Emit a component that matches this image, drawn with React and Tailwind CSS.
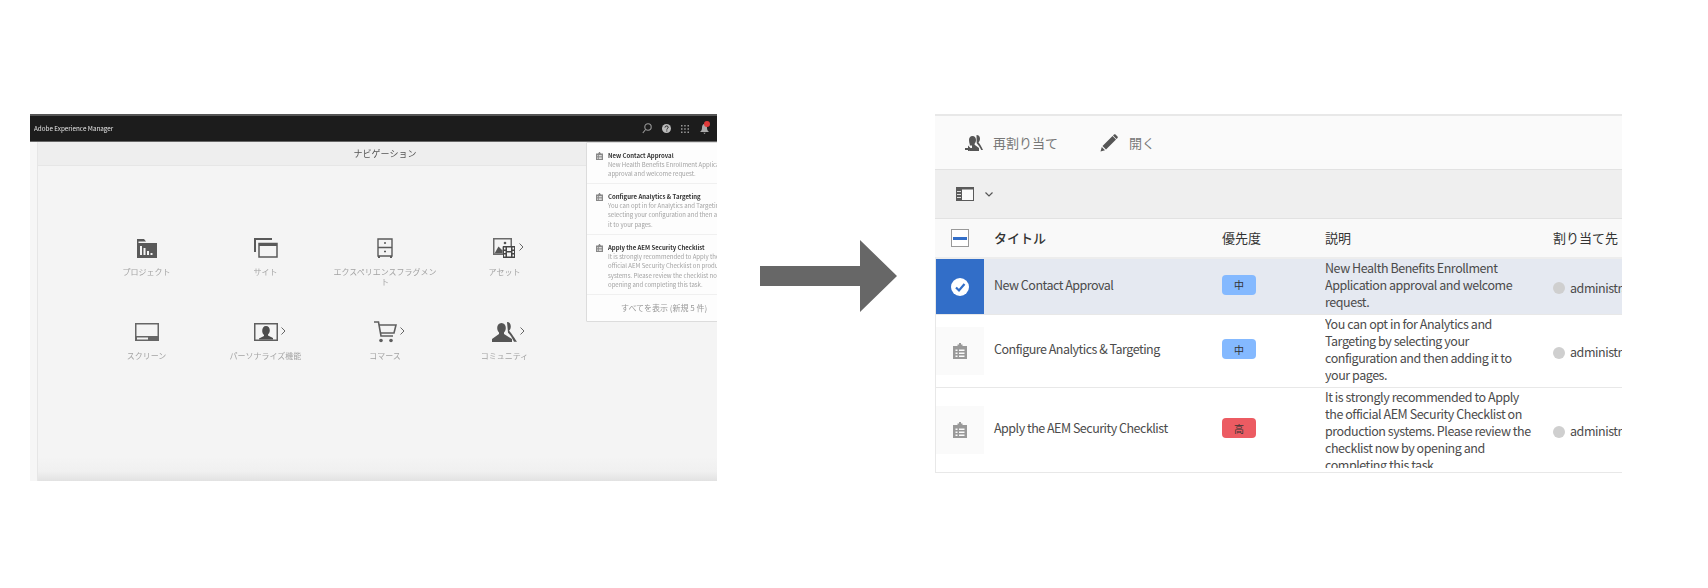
import React from 'react';

const navItems = [
  { label: 'プロジェクト', icon: 'project' },
  { label: 'サイト', icon: 'sites' },
  { label: 'エクスペリエンスフラグメント', icon: 'fragments' },
  { label: 'アセット', icon: 'assets', more: true },
  { label: 'スクリーン', icon: 'screens' },
  { label: 'パーソナライズ機能', icon: 'personalize', more: true },
  { label: 'コマース', icon: 'cart', more: true },
  { label: 'コミュニティ', icon: 'community', more: true },
];

const notices = [
  {
    title: 'New Contact Approval',
    text: 'New Health Benefits Enrollment Application approval and welcome request.',
    height: 'h-[41px]',
  },
  {
    title: 'Configure Analytics & Targeting',
    text: 'You can opt in for Analytics and Targeting by selecting your configuration and then adding it to your pages.',
    height: 'h-[51px]',
  },
  {
    title: 'Apply the AEM Security Checklist',
    text: 'It is strongly recommended to Apply the official AEM Security Checklist on production systems. Please review the checklist now by opening and completing this task.',
    height: 'h-[60px]',
  },
];

const tasks = [
  {
    title: 'New Contact Approval',
    priority: '中',
    badge: 'bg-[#84b9ff]',
    text: 'New Health Benefits Enrollment\nApplication approval and welcome\nrequest.',
    selected: true,
  },
  {
    title: 'Configure Analytics & Targeting',
    priority: '中',
    badge: 'bg-[#84b9ff]',
    text: 'You can opt in for Analytics and\nTargeting by selecting your\nconfiguration and then adding it to\nyour pages.',
  },
  {
    title: 'Apply the AEM Security Checklist',
    priority: '高',
    badge: 'bg-[#ec5b62]',
    text: 'It is strongly recommended to Apply\nthe official AEM Security Checklist on\nproduction systems. Please review the\nchecklist now by opening and\ncompleting this task.',
  },
];

const NavIcon = ({ name }) => {
  if (name === 'project') {
    return (
      <svg width="22" height="20" viewBox="0 0 22 20" fill="#595959">
        <path d="M1 1h7l2 2.500H2.500V5H21v15H1z" />
        <path fill="#f4f4f4" d="M4 8h2v9H4zM7.500 10h2v7h-2zM11 13h2v4h-2zM14.500 15h2v2h-2z" />
      </svg>
    );
  }
  if (name === 'sites') {
    return (
      <svg width="24" height="22" viewBox="0 0 24 22" fill="none" stroke="#595959">
        <path d="M1 15V2h17" strokeWidth="2" />
        <path d="M5 6.500h18V20H5z" strokeWidth="1.500" />
        <path d="M5 6h18v3H5z" fill="#595959" stroke="none" />
      </svg>
    );
  }
  if (name === 'fragments') {
    return (
      <svg width="16" height="20" viewBox="0 0 16 20" fill="none" stroke="#5a5a5a" strokeWidth="1.400">
        <path d="M1 1h14v17H1zM1 9.500h14" />
        <path d="M2 18v2M14 18v2" strokeWidth="2" />
        <path d="M7 5h2M7 13.500h2" strokeWidth="1.500" />
      </svg>
    );
  }
  if (name === 'assets') {
    return (
      <svg width="23" height="20" viewBox="0 0 23 20">
        <path d="M0 0h19v9h-9v8H0z" fill="#6a6a6a" />
        <path d="M1.500 1.500h16v7h-8v7h-8z" fill="#f4f4f4" />
        <path d="M1.500 15.500l4-7 4 4v3z" fill="#555" />
        <circle cx="12" cy="5" r="1.300" fill="#555" />
        <path d="M10 8h12v12H10z" fill="#444" />
        <path fill="#f4f4f4" d="M11 9.500h1.500v2H11zM11 13h1.500v2H11zM11 16.500h1.500v2H11zM19.500 9.500H21v2h-1.500zM19.500 13H21v2h-1.500zM19.500 16.500H21v2h-1.500zM14 9.500h4v3.500h-4zM14 14.500h4v4h-4z" />
      </svg>
    );
  }
  if (name === 'screens') {
    return (
      <svg width="24" height="18" viewBox="0 0 24 18">
        <path d="M0 0h24v18H0z" fill="#666" />
        <path d="M1.500 1.500h21V13h-21z" fill="#f4f4f4" />
        <path d="M2 14.500h11v2H2z" fill="#f4f4f4" />
      </svg>
    );
  }
  if (name === 'personalize') {
    return (
      <svg width="24" height="18" viewBox="0 0 24 18">
        <path d="M0 0h24v18H0z" fill="#5f5f5f" />
        <path d="M1.500 1.500h21v15h-21z" fill="#f4f4f4" />
        <path d="M12 3c2.500 0 3.800 2 3.800 4.500 0 1.800-1 3.300-1.800 4v1l5 2.500v1.500H5V15.500l5-2.500v-1c-.8-.7-1.800-2.200-1.800-4C8.200 5 9.500 3 12 3z" fill="#4d4d4d" />
      </svg>
    );
  }
  if (name === 'cart') {
    return (
      <svg width="23" height="22" viewBox="0 0 23 22" fill="none" stroke="#5f5f5f" strokeWidth="1.600">
        <path d="M0 1h4.500l2.500 14h12" />
        <path d="M5 4h17l-2 8H6.500" />
        <circle cx="7" cy="19.500" r="1.800" fill="#5f5f5f" stroke="none" />
        <circle cx="17" cy="19.500" r="1.800" fill="#5f5f5f" stroke="none" />
      </svg>
    );
  }
  return (
    <svg width="25" height="20" viewBox="0 0 25 20" fill="#555">
      <path d="M15 0c2.600 0 3.800 2 3.800 4.500 0 2-1 3.600-1.700 4.300 2 2 3.900 5 7.900 11h-3c-2-4-3.500-7-6-9z" />
      <path d="M9.500 1c2.800 0 4.300 2.200 4.300 5 0 2-1 3.800-1.800 4.600v1.400L20 17v3H0v-3l7-5v-1.400C6.200 9.800 5.200 8 5.200 6c0-2.800 1.500-5 4.300-5z" />
    </svg>
  );
};

const TaskIcon = ({ size = 14, color = '#999' }) => (
  <svg width={size} height={size * 1.15} viewBox="0 0 14 16" fill={color}>
    <path d="M0 3h4.500V1.500h1.500V0h2v1.500h1.500V3H14v13H0z" />
    <path fill="#fafafa" d="M2.500 6.500h2V8h-2zM6 6.500h5.500V8H6zM2.500 9.500h2V11h-2zM6 9.500h5.500V11H6zM2.500 12.500h2V14h-2zM6 12.500h5.500V14H6z" />
  </svg>
);

const LeftPanel = () => (
  <div className="relative w-[687px] h-[367px] shrink-0 overflow-hidden bg-[#f4f4f4] blur-[0.3px]">
    <div className="h-[28px] bg-[#1c1c1c] border-t-2 border-b border-t-[#555] border-b-[#666] flex items-center pl-1 pr-[8px]">
      <span className="text-[6.300px] text-[#e4e4e4]">Adobe Experience Manager</span>
      <div className="ml-auto flex items-center gap-[10px]">
        <svg width="10" height="11" viewBox="0 0 10 11" fill="none" stroke="#999" strokeWidth="1.100">
          <circle cx="6" cy="4" r="3.200" />
          <path d="M3.600 6.500L.8 10" />
        </svg>
        <svg width="9" height="9" viewBox="0 0 9 9">
          <circle cx="4.500" cy="4.500" r="4.500" fill="#bbb" />
          <path d="M3 3.500c0-2 3.200-2 3.200-.2 0 1.100-1.400 1.100-1.400 2.300" fill="none" stroke="#1c1c1c" strokeWidth="1" />
          <path d="M4.300 6.500h1v1h-1z" fill="#1c1c1c" />
        </svg>
        <svg width="8" height="8" viewBox="0 0 8 8" fill="#999">
          <path d="M0 0h1.500v1.500H0zM3.200 0h1.500v1.500H3.200zM6.500 0H8v1.500H6.500zM0 3.200h1.500v1.500H0zM3.200 3.200h1.500v1.500H3.200zM6.500 3.200H8v1.500H6.500zM0 6.500h1.500V8H0zM3.200 6.500h1.500V8H3.200zM6.500 6.500H8V8H6.500z" />
        </svg>
        <div className="relative ml-[1px]">
          <svg width="9" height="10" viewBox="0 0 9 10" fill="#aaa">
            <path d="M4.500 0C6.500 0 7 2 7 4c0 2 1 3 2 4H0c1-1 2-2 2-4s.5-4 2.500-4zM3.300 8.700h2.400L4.500 10z" />
          </svg>
          <span className="absolute -top-[3px] left-[4px] w-[6px] h-[6px] rounded-full bg-[#e03a3a]" />
        </div>
      </div>
    </div>
    <div className="flex h-[339px]">
      <div className="w-[8px] shrink-0 bg-[#f6f6f6] border-r border-[#e6e6e6]" />
      <div className="relative flex-1 flex flex-col">
        <div className="h-[24px] shrink-0 bg-[#eeeeee] border-b border-[#e6e6e6] flex items-center justify-center pl-[15px] text-[9px] text-[#555]">
          ナビゲーション
        </div>
        <div className="grid grid-cols-[119px_119px_120px_119px] auto-rows-[84px] pl-[49px] pt-[71px]">
          {navItems.map(item => (
            <div key={item.label} className="flex flex-col items-center">
              <div className="relative h-[22px] flex items-center justify-center">
                <NavIcon name={item.icon} />
                {item.more && (
                  <svg width="5" height="8" viewBox="0 0 5 8" fill="none" stroke="#666" strokeWidth="1" className="absolute left-full top-[6px] ml-[3px]">
                    <path d="M.5.5L4 4 .5 7.500" />
                  </svg>
                )}
              </div>
              <div className="mt-[8px] w-[105px] text-center text-[8px] leading-[10px] text-[#a3a3a3]">{item.label}</div>
            </div>
          ))}
        </div>
        <div className="absolute left-0 right-0 bottom-0 h-[24px] bg-gradient-to-b from-[#f4f4f4] via-[#f0f0f0] via-60% to-[#e2e2e2]" />
      </div>
    </div>
    <div className="absolute left-[556px] top-[28px] w-[170px] bg-[#fdfdfd] border border-[#dcdcdc] rounded-[1px]">
      {notices.map(notice => (
        <div key={notice.title} className={`flex border-b border-[#f0f0f0] pl-[9px] pt-[8px] ${notice.height}`}>
          <div className="w-[12px] shrink-0 pt-[1px]">
            <TaskIcon size={7} color="#888" />
          </div>
          <div className="w-[130px]">
            <div className="text-[6px] leading-[9px] font-bold text-[#333]">{notice.title}</div>
            <div className="text-[6px] leading-[9.300px] text-[#a3a3a3]">{notice.text}</div>
          </div>
        </div>
      ))}
      <div className="h-[26px] flex items-center pl-[34px] text-[8px] text-[#999]">すべてを表示 (新規 5 件)</div>
    </div>
  </div>
);

const ArrowGraphic = () => (
  <svg width="137" height="72" viewBox="0 0 137 72" fill="#676767" className="shrink-0 ml-[43px] mt-[126px]">
    <path d="M0 26h100V0l37 36-37 36V46H0z" />
  </svg>
);

const TaskRow = ({ task, index }) => {
  const heights = ['h-[56px]', 'h-[73px]', 'h-[85px]'];
  return (
    <div
      className={`grid grid-cols-[48px_238px_103px_228px_1fr] items-center border-b border-[#e8e8e8] ${heights[index]} ${
        task.selected ? 'bg-[#e5e9f1]' : 'bg-white'
      }`}
    >
      {task.selected ? (
        <div className="h-[55px] bg-[#326ec8] flex items-center justify-center">
          <svg width="18" height="18" viewBox="0 0 18 18">
            <circle cx="9" cy="9" r="9" fill="#fff" />
            <path d="M5 9.500l3 3 5.500-6.500" fill="none" stroke="#326ec8" strokeWidth="2.200" />
          </svg>
        </div>
      ) : (
        <div className="w-[48px] h-[48px] bg-[#fafafa] flex items-center justify-center">
          <TaskIcon />
        </div>
      )}
      <div className="pl-[10px] text-[12.500px] tracking-[-0.5px] text-[#4b4b4b] -mt-[3px]">{task.title}</div>
      <div className="-mt-[4px]">
        <span className={`flex items-center justify-center w-[34px] h-[20px] rounded-[4px] text-[10px] text-[#333] ${task.badge}`}>
          {task.priority}
        </span>
      </div>
      <div className={`self-start pr-[8px] whitespace-pre-line text-[12.500px] tracking-[-0.45px] leading-[17px] text-[#4b4b4b] overflow-hidden ${index === 2 ? 'h-[80px]' : ''}`}>
        {task.text}
      </div>
      <div className="flex items-center mt-[3px] whitespace-nowrap text-[12.500px] tracking-[-0.45px] text-[#4b4b4b]">
        <span className="w-[12px] h-[12px] rounded-full bg-[#cfcfcf] mr-[5px] shrink-0" />
        administrator
      </div>
    </div>
  );
};

const RightPanel = () => (
  <div className="w-[687px] shrink-0 ml-[38px] overflow-hidden">
    <div className="h-[56px] bg-[#fafafa] border-t-2 border-b border-t-[#e8e8e8] border-b-[#e2e2e2] flex items-center pl-[30px] text-[13px] text-[#777]">
      <svg width="18" height="16" viewBox="0 0 18 16" fill="#555">
        <path d="M11.500 0c2.300 0 3.500 1.600 3.500 3.800 0 1.600-.8 3-1.500 3.700 1.600 1.500 2.800 3.700 4.500 7.500h-1.800c-1.300-3-2.700-5-4.500-6.800z" />
        <path d="M7.500 1c2.300 0 3.500 1.800 3.500 4 0 1.600-.8 3-1.400 3.700v1L14 13v3H4.500v-3H7v-2.500H4.800v-1C4.300 8 4 6.500 4 5c0-2.200 1.200-4 3.500-4z" />
        <path d="M0 13h3v-2.500l3.500 3.500L3 17v-2H0z" />
      </svg>
      <span className="ml-[10px]">再割り当て</span>
      <svg width="18" height="18" viewBox="0 0 18 18" fill="#555" className="ml-[42px]">
        <path d="M12.500 2l3.500 3.500L6 15.500 2.500 12zM14 .5c.5-.5 1-.5 1.500 0l2 2c.5.5.5 1 0 1.500l-1 1L13 1.500zM1.800 13l3.200 3.200L.5 17.500z" />
      </svg>
      <span className="ml-[11px]">開く</span>
    </div>
    <div className="h-[49px] bg-[#efefef] border-b border-[#e2e2e2] flex items-center pl-[21px]">
      <svg width="18" height="14" viewBox="0 0 18 14">
        <path d="M0 0h18v14H0z" fill="#5a5a5a" />
        <path d="M6 2.500h11V13H6z" fill="#fafafa" />
        <path d="M1 4h4v1H1zM1 7h4v1H1zM1 10h4v1H1z" fill="#ddd" />
      </svg>
      <svg width="8" height="5" viewBox="0 0 8 5" fill="none" stroke="#555" strokeWidth="1.200" className="ml-[11px]">
        <path d="M.5.5L4 4 7.500.5" />
      </svg>
    </div>
    <div className="h-[40px] bg-[#f9f9f9] border-b-2 border-[#ededed] grid grid-cols-[49px_238px_103px_228px_1fr] items-center text-[13px] text-[#333]">
      <div className="flex justify-center">
        <span className="w-[18px] h-[18px] bg-white border border-[#999] flex items-center justify-center">
          <span className="w-[14px] h-[3px] bg-[#326ec8]" />
        </span>
      </div>
      <div className="pl-[10px] font-medium">タイトル</div>
      <div>優先度</div>
      <div>説明</div>
      <div className="whitespace-nowrap">割り当て先</div>
    </div>
    <div className="border-l border-[#e8e8e8]">
      {tasks.map((task, index) => (
        <TaskRow key={task.title} task={task} index={index} />
      ))}
    </div>
  </div>
);

const App = () => (
  <div className="w-[1708px] h-[588px] bg-white flex items-start pl-[30px] pt-[114px] font-['Noto_Sans_CJK_JP',sans-serif] overflow-hidden">
    <LeftPanel />
    <ArrowGraphic />
    <RightPanel />
  </div>
);

export default App;
